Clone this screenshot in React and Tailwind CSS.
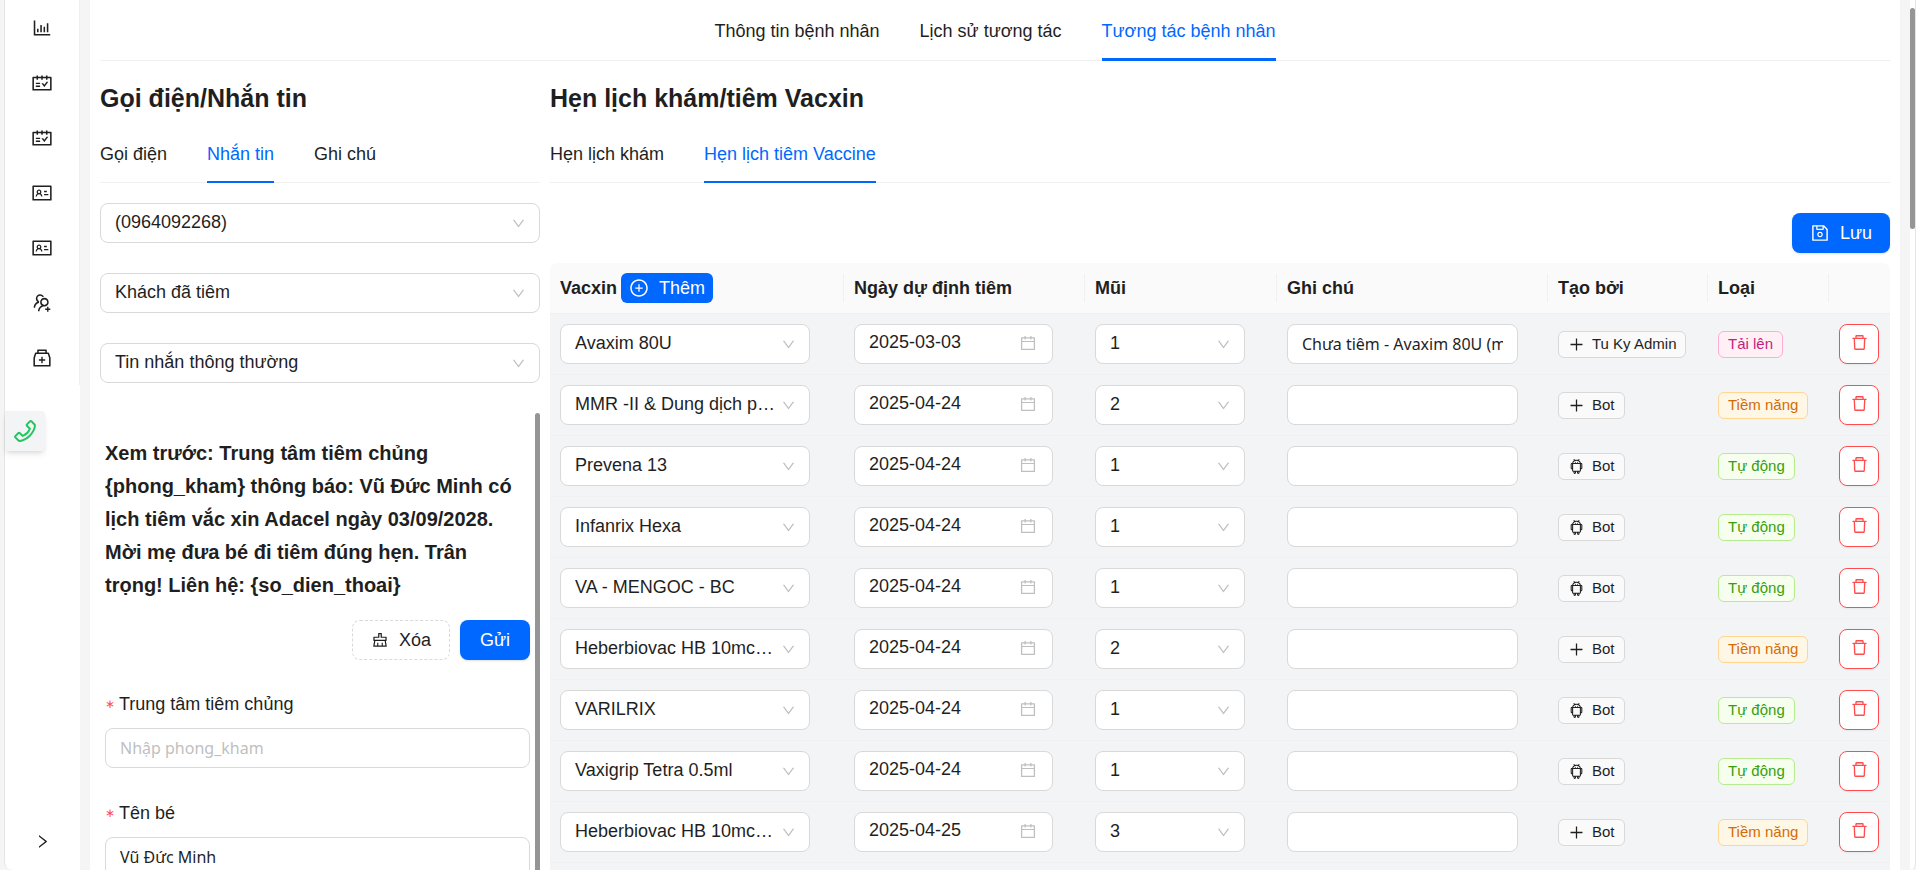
import React from "react";
import {
  AiOutlineAndroid,
  AiOutlineBarChart,
  AiOutlineCalendar,
  AiOutlineClear,
  AiOutlineDelete,
  AiOutlineDown,
  AiOutlineIdcard,
  AiOutlineMedicineBox,
  AiOutlinePhone,
  AiOutlinePlus,
  AiOutlinePlusCircle,
  AiOutlineRight,
  AiOutlineSave,
  AiOutlineSchedule,
  AiOutlineUsergroupAdd,
} from "react-icons/ai";

const menuItems = [
  { key: "report", label: "Báo cáo", icon: <AiOutlineBarChart /> },
  { key: "schedule", label: "Lịch hẹn", icon: <AiOutlineSchedule /> },
  { key: "vaccine-schedule", label: "Lịch tiêm", icon: <AiOutlineSchedule /> },
  { key: "patients", label: "Bệnh nhân", icon: <AiOutlineIdcard /> },
  { key: "customers", label: "Khách hàng", icon: <AiOutlineIdcard /> },
  { key: "groups", label: "Nhóm", icon: <AiOutlineUsergroupAdd /> },
  { key: "medicine", label: "Vắc xin", icon: <AiOutlineMedicineBox /> },
];

const messageSelects = [
  { key: "phone", label: "Số điện thoại", value: "(0964092268)" },
  { key: "group", label: "Nhóm khách", value: "Khách đã tiêm" },
  { key: "type", label: "Loại tin nhắn", value: "Tin nhắn thông thường" },
];

const preview =
  "Xem trước: Trung tâm tiêm chủng {phong_kham} thông báo: Vũ Đức Minh có lịch tiêm vắc xin Adacel ngày 03/09/2028. Mời mẹ đưa bé đi tiêm đúng hẹn. Trân trọng! Liên hệ: {so_dien_thoai}";

const rows = [
  { vaccine: "Avaxim 80U", date: "2025-03-03", dose: "1", note: "Chưa tiêm - Avaxim 80U (mũi 1)", by: "Tu Ky Admin", type: "upload" },
  { vaccine: "MMR -II & Dung dịch pha", date: "2025-04-24", dose: "2", note: "", by: "Bot", type: "potential" },
  { vaccine: "Prevena 13", date: "2025-04-24", dose: "1", note: "", by: "Bot", type: "auto" },
  { vaccine: "Infanrix Hexa", date: "2025-04-24", dose: "1", note: "", by: "Bot", type: "auto" },
  { vaccine: "VA - MENGOC - BC", date: "2025-04-24", dose: "1", note: "", by: "Bot", type: "auto" },
  { vaccine: "Heberbiovac HB 10mcg/0.5ml", date: "2025-04-24", dose: "2", note: "", by: "Bot", type: "potential" },
  { vaccine: "VARILRIX", date: "2025-04-24", dose: "1", note: "", by: "Bot", type: "auto" },
  { vaccine: "Vaxigrip Tetra 0.5ml", date: "2025-04-24", dose: "1", note: "", by: "Bot", type: "auto" },
  { vaccine: "Heberbiovac HB 10mcg/0.5ml", date: "2025-04-25", dose: "3", note: "", by: "Bot", type: "potential" },
];

const types = {
  upload: { label: "Tải lên", style: "text-[#c41d7f] bg-[#fff0f6] border-[#ffadd2]" },
  potential: { label: "Tiềm năng", style: "text-[#d46b08] bg-[#fff7e6] border-[#ffd591]" },
  auto: { label: "Tự động", style: "text-[#389e0d] bg-[#f6ffed] border-[#b7eb8f]" },
};

const SelectBox = ({ label, value }) => (
  <div className="relative">
    <select
      aria-label={label}
      defaultValue={value}
      className="w-full h-10 pl-3.5 pr-8 pb-0.5 appearance-none truncate bg-white border border-[#d9d9d9] rounded-lg"
    >
      <option>{value}</option>
    </select>
    <AiOutlineDown
      size={15}
      className="absolute right-3.5 top-[13px] text-[#bfbfbf] pointer-events-none"
    />
  </div>
);

const Tabs = ({ items, active, centered, thick }) => (
  <div
    className={`flex gap-10 border-b border-[#f0f0f0] ${
      centered ? "justify-center" : ""
    }`}
  >
    {items.map((item) => (
      <button
        key={item}
        className={`-mb-px ${
          thick ? "pt-[17px] pb-[13px] border-b-3" : "pt-3.5 pb-[13px] border-b-2"
        } ${
          item === active
            ? "text-[#0068ff] border-[#0068ff]"
            : "border-transparent"
        }`}
      >
        {item}
      </button>
    ))}
  </div>
);

const SideBar = () => (
  <aside className="w-[76px] shrink-0 flex flex-col bg-white border-l border-[#e5e5e5] rounded-bl-lg">
    <nav className="flex flex-col items-center border-r border-[#f0f0f0]">
      {menuItems.map((item) => (
        <a
          key={item.key}
          href={`#${item.key}`}
          aria-label={item.label}
          className="w-full h-[55px] flex items-center justify-center text-[22px]"
        >
          {item.icon}
        </a>
      ))}
    </nav>
    <button
      aria-label="Gọi"
      className="mt-[26px] w-10 h-10 flex items-center justify-center bg-gray-100 text-[#22c55e] rounded-r-sm shadow-md"
    >
      <AiOutlinePhone size={28} />
    </button>
    <button aria-label="Mở rộng" className="mt-auto mb-5 self-center">
      <AiOutlineRight size={17} />
    </button>
  </aside>
);

const Field = ({ id, label, placeholder, value }) => (
  <div>
    <label htmlFor={id} className="flex items-center gap-1 leading-7">
      <span className="text-xs text-[#ff4d4f]">∗</span>
      {label}
    </label>
    <input
      id={id}
      placeholder={placeholder}
      defaultValue={value}
      className="mt-2.5 w-full h-10 px-3.5 font-['Noto_Sans',sans-serif] text-base border border-[#d9d9d9] rounded-lg placeholder:text-[#bfbfbf]"
    />
  </div>
);

const MessagePanel = () => (
  <section className="w-[440px] shrink-0 flex flex-col min-h-0">
    <h2 className="mt-[19px] mb-2.5 text-[25px] leading-9 font-bold">
      Gọi điện/Nhắn tin
    </h2>
    <Tabs items={["Gọi điện", "Nhắn tin", "Ghi chú"]} active="Nhắn tin" />
    <div className="mt-5 flex flex-col gap-[30px]">
      {messageSelects.map((item) => (
        <SelectBox key={item.key} label={item.label} value={item.value} />
      ))}
    </div>
    <div className="mt-[30px] flex min-h-0 flex-1">
      <div className="flex-1 min-w-0 px-[5px] overflow-hidden">
        <p className="mt-6 text-xl leading-[33px] font-bold">{preview}</p>
        <div className="mt-4.5 mb-7.5 flex justify-end gap-2.5">
          <button className="h-10 px-[18px] flex items-center gap-2.5 border border-dashed border-[#d9d9d9] rounded-lg">
            <AiOutlineClear size={18} />
            Xóa
          </button>
          <button className="h-10 px-5 bg-[#0068ff] text-white rounded-lg shadow-sm">
            Gửi
          </button>
        </div>
        <div className="flex flex-col gap-[31px]">
          <Field
            id="phong_kham"
            label="Trung tâm tiêm chủng"
            placeholder="Nhập phong_kham"
          />
          <Field id="ten_be" label="Tên bé" value="Vũ Đức Minh" />
        </div>
      </div>
      {/* Scroll thumb */}
      <div className="w-[5px] bg-[#959595] rounded-t-sm" />
    </div>
  </section>
);

const headings = [
  { label: "Vacxin", width: "w-[294px]" },
  { label: "Ngày dự định tiêm", width: "w-[241px]" },
  { label: "Mũi", width: "w-[192px]" },
  { label: "Ghi chú", width: "w-[271px]" },
  { label: "Tạo bởi", width: "w-[160px]" },
  { label: "Loại", width: "w-[121px]" },
  { label: "", width: "w-[61px]" },
];

const VaccineTable = () => (
  <table className="w-full table-fixed text-left">
    <thead>
      <tr className="h-[50px] border-b border-[#f0f0f0]">
        {headings.map((item, index) => (
          <th
            key={index}
            className={`p-0 bg-[#fafafa] first:rounded-tl-lg last:rounded-tr-lg ${item.width}`}
          >
            <div
              className={`h-7 px-2.5 flex items-center gap-1 ${
                index < headings.length - 1 ? "border-r border-[#f0f0f0]" : ""
              }`}
            >
              {item.label}
              {index === 0 && (
                <button className="h-[30px] px-2 flex items-center gap-2.5 font-normal bg-[#0068ff] text-white rounded-md">
                  <AiOutlinePlusCircle size={20} />
                  Thêm
                </button>
              )}
            </div>
          </th>
        ))}
      </tr>
    </thead>
    <tbody>
      {rows.map((row, index) => (
        <tr key={index} className="h-[61px] bg-[#f3f4f6] border-b border-[#f0f0f0]">
          <td className="pl-2.5 pr-[34px]">
            <SelectBox label="Vacxin" value={row.vaccine} />
          </td>
          <td className="pl-2.5 pr-8">
            <div className="relative">
              <input
                aria-label="Ngày dự định tiêm"
                defaultValue={row.date}
                className="w-full h-10 pl-3.5 pr-9 pb-0.5 bg-white border border-[#d9d9d9] rounded-lg"
              />
              <AiOutlineCalendar
                size={18}
                className="absolute right-4 top-2.5 text-[#bfbfbf]"
              />
            </div>
          </td>
          <td className="pl-2.5 pr-8">
            <SelectBox label="Mũi" value={row.dose} />
          </td>
          <td className="pl-2.5 pr-[30px]">
            <input
              aria-label="Ghi chú"
              defaultValue={row.note}
              className="w-full h-10 px-3.5 font-['Noto_Sans',sans-serif] text-base bg-white border border-[#d9d9d9] rounded-lg"
            />
          </td>
          <td className="pl-2.5">
            <span className="h-[27px] px-[9px] inline-flex items-center gap-[7px] align-middle text-[15px] bg-[#fafafa] border border-[#d9d9d9] rounded-md">
              {row.type === "auto" ? (
                <AiOutlineAndroid size={17} />
              ) : (
                <AiOutlinePlus size={17} />
              )}
              {row.by}
            </span>
          </td>
          <td className="pl-2.5">
            <span
              className={`h-[27px] px-[9px] inline-flex items-center align-middle text-[15px] border rounded-md ${
                types[row.type].style
              }`}
            >
              {types[row.type].label}
            </span>
          </td>
          <td className="pl-2.5">
            <button
              aria-label="Xóa"
              className="w-10 h-10 pb-0.5 flex items-center justify-center bg-white text-[#ff4d4f] border border-[#ff4d4f] rounded-lg shadow-xs"
            >
              <AiOutlineDelete size={19} />
            </button>
          </td>
        </tr>
      ))}
      <tr className="h-4 bg-[#f3f4f6]">
        <td colSpan={7} />
      </tr>
    </tbody>
  </table>
);

const SchedulePanel = () => (
  <section className="flex-1 min-w-0">
    <h2 className="mt-[19px] mb-2.5 text-[25px] leading-9 font-bold">
      Hẹn lịch khám/tiêm Vacxin
    </h2>
    <Tabs
      items={["Hẹn lịch khám", "Hẹn lịch tiêm Vaccine"]}
      active="Hẹn lịch tiêm Vaccine"
    />
    <div className="mt-[30px] mb-2.5 flex justify-end">
      <button className="h-10 px-[18px] flex items-center gap-2.5 bg-[#0068ff] text-white rounded-lg shadow-sm">
        <AiOutlineSave size={20} />
        Lưu
      </button>
    </div>
    <VaccineTable />
  </section>
);

const App = () => {
  return (
    <div className="h-screen flex overflow-hidden bg-[#f5f5f5] pl-1 font-['Liberation_Sans',Arial,sans-serif] text-lg leading-7 text-[#1f1f1f]">
      <SideBar />
      <main className="mx-2.5 px-2.5 flex-1 min-w-0 flex flex-col bg-white">
        <Tabs
          items={["Thông tin bệnh nhân", "Lịch sử tương tác", "Tương tác bệnh nhân"]}
          active="Tương tác bệnh nhân"
          centered
          thick
        />
        <div className="flex flex-1 min-h-0 gap-2.5">
          <MessagePanel />
          <SchedulePanel />
        </div>
      </main>
      {/* Page scroll bar */}
      <div className="w-1.5 pt-2 bg-white border-r border-[#e5e5e5] rounded-br-lg">
        <div className="h-[221px] bg-[#959595] rounded-sm" />
      </div>
    </div>
  );
};

export default App;
